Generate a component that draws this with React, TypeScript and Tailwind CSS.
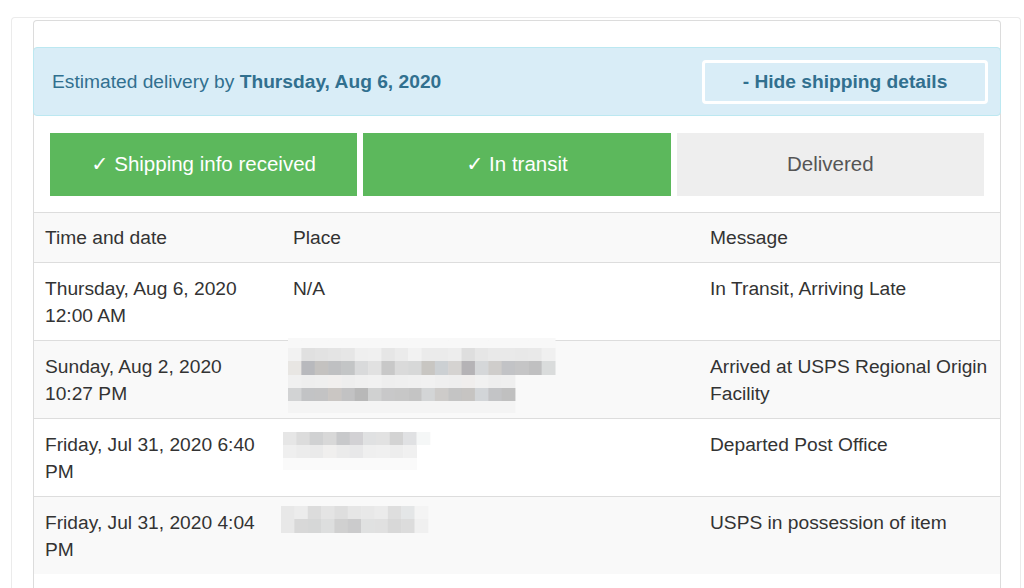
import React from "react";

type Band = { y: number; h: number; x: number; cells: string[] };

// Pixelated redaction block drawn over the "Place" cell.
function Mosaic({ width, height, bands, cell }: { width: number; height: number; bands: Band[]; cell: number }) {
  return (
    <svg width={width} height={height} viewBox={`0 0 ${width} ${height}`} className="block">
      {bands.map((b, bi) =>
        b.cells.map((c, ci) => (
          <rect key={`${bi}-${ci}`} x={b.x + ci * cell} y={b.y} width={cell + 0.5} height={b.h} fill={c} />
        ))
      )}
    </svg>
  );
}

const C = 13.35;

const place2: Band[] = [
  { y: 0, h: 10, x: 0, cells: Array(20).fill("#f8f8f8") },
  {
    y: 10,
    h: 13,
    x: 0,
    cells: ["#f2f2f2", "#e0e0e0", "#e2e2e2", "#e4e4e4", "#e6e6e6", "#efefef", "#f0f0f0", "#e6e6e6", "#ebebeb", "#f2f2f2", "#ebebeb", "#ebebeb", "#ededed", "#dedede", "#e6e6e6", "#e9e9e9", "#e9e9e9", "#e8e8e8", "#e9e9e9", "#f0f0f0"],
  },
  {
    y: 23,
    h: 14,
    x: 0,
    cells: ["#e8e6e3", "#b8b9bd", "#c4c2c0", "#bfc0c2", "#c3c5c6", "#d9dadb", "#e1e1e1", "#c8c8c8", "#dadada", "#d7d8d8", "#c8c6c2", "#ccd0d3", "#d5d3d1", "#b5b3b6", "#d5d7d9", "#cfcdcb", "#c2c3c6", "#c5c5c6", "#c0c0c1", "#dadcdc"],
  },
  { y: 37, h: 13, x: 0, cells: ["#f0f0f0", "#eeeeee", "#efefef", "#f1efee", "#eeeeee", "#f0f0f0", "#f1f1f1", "#eeeeee", "#efefef", "#f0f0f0", "#f1f1f1", "#efefef", "#eeeeee", "#f0eeed", "#f1f1f1", "#eeeeee", "#efefef"] },
  {
    y: 50,
    h: 13,
    x: 0,
    cells: ["#d2d3d4", "#c2c3c5", "#c3c3c4", "#cac6c3", "#c2c2c3", "#b8b8b8", "#d0d1d1", "#c8c8c9", "#c7c7c7", "#c4c4c4", "#d3d5d6", "#cdcbc9", "#c4c4c4", "#c6c4c2", "#d2d5d8", "#c3c4c6", "#c0c0c0"],
  },
  { y: 63, h: 12, x: 0, cells: Array(17).fill("#f4f4f4") },
];

const place3: Band[] = [
  { y: 0, h: 13, x: 0, cells: ["#e6e6e6", "#dcdcdc", "#d0d1d2", "#d8d8d8", "#c8c9cb", "#d2d1d4", "#e0e1e2", "#e2e2e2", "#d3d3d3", "#e0e1e3", "#f5f7f7"] },
  { y: 13, h: 13, x: 0, cells: ["#efefef", "#ececec", "#eaeaea", "#f0efee", "#ebebeb", "#e8e8e9", "#efefef", "#f0f0f0", "#ededed", "#f0f0f0"] },
  { y: 26, h: 12, x: 0, cells: Array(10).fill("#fafafa") },
];

const place4: Band[] = [
  { y: 0, h: 13, x: 0, cells: ["#e8e8e8", "#ececec", "#dcdcdc", "#e4e4e4", "#dedede", "#e6e6e6", "#e8e8e8", "#ebebeb", "#dedede", "#e4e6e7", "#f4f4f4"] },
  { y: 13, h: 14, x: 0, cells: ["#e8e8e8", "#d8d8d8", "#d6d7d7", "#dddede", "#d0d0d0", "#cbcbcc", "#e0e1e1", "#e0e0e0", "#d8d8d8", "#dcdcdc", "#f0f0f0"] },
];

type Row = { time: string; place?: React.ReactNode; message: string; striped: boolean };

const rows: Row[] = [
  { time: "Thursday, Aug 6, 2020 12:00 AM", place: "N/A", message: "In Transit, Arriving Late", striped: false },
  {
    time: "Sunday, Aug 2, 2020 10:27 PM",
    place: (
      <div className="absolute left-[7px] top-[-3px]">
        <Mosaic width={268} height={75} bands={place2} cell={C} />
      </div>
    ),
    message: "Arrived at USPS Regional Origin Facility",
    striped: true,
  },
  {
    time: "Friday, Jul 31, 2020 6:40 PM",
    place: (
      <div className="absolute left-[2px] top-[13px]">
        <Mosaic width={148} height={38} bands={place3} cell={C} />
      </div>
    ),
    message: "Departed Post Office",
    striped: false,
  },
  {
    time: "Friday, Jul 31, 2020 4:04 PM",
    place: (
      <div className="absolute left-[0px] top-[9px]">
        <Mosaic width={148} height={27} bands={place4} cell={C} />
      </div>
    ),
    message: "USPS in possession of item",
    striped: true,
  },
];

export default function App() {
  return (
    <div
      className="min-h-[588px] bg-white pt-[17px] text-[19.2px] leading-[27px] text-[#333]"
      style={{ fontFamily: '"Liberation Sans", Arial, "DejaVu Sans", sans-serif' }}
    >
      <div className="ml-[11px] mr-[3px] min-h-[620px] rounded-t-[4px] border border-b-0 border-[#ebebeb] pl-[21px] pr-[19px] pt-[2px]">
        <div className="min-h-[620px] rounded-t-[4px] border border-b-0 border-[#dcdcdc] pt-[26px]">
          {/* estimated delivery banner */}
          <div className="-mx-px flex h-[69px] items-center justify-between rounded-[4px] border border-[#bce8f1] bg-[#d9edf7] pl-[18px] pr-[12px] text-[#31708f]">
            <div>
              Estimated delivery by <span className="font-bold">Thursday, Aug 6, 2020</span>
            </div>
            <button className="h-[44px] w-[286px] rounded-[4px] border-[3px] border-white bg-transparent text-center font-bold text-[#31708f]">
              - Hide shipping details
            </button>
          </div>

          {/* progress steps */}
          <div className="mt-[17px] grid grid-cols-3 gap-[6px] px-[16px] text-[20.5px]">
            <div className="flex h-[63px] items-center justify-center bg-[#5cb85c] pb-[3px] text-white">✓ Shipping info received</div>
            <div className="flex h-[63px] items-center justify-center bg-[#5cb85c] pb-[3px] text-white">✓ In transit</div>
            <div className="flex h-[63px] items-center justify-center bg-[#eeeeee] pb-[3px] text-[#555]">Delivered</div>
          </div>

          {/* tracking history */}
          <table className="mt-[16px] w-full table-fixed border-collapse">
            <colgroup>
              <col className="w-[247px]" />
              <col className="w-[417px]" />
              <col />
            </colgroup>
            <thead>
              <tr className="bg-[#f9f9f9]">
                <th className="border-t border-b border-[#dddddd] pl-[11px] pr-3 pb-[11px] pt-[11px] text-left font-normal">Time and date</th>
                <th className="border-t border-b border-[#dddddd] px-3 pb-[11px] pt-[11px] text-left font-normal">Place</th>
                <th className="border-t border-b border-[#dddddd] px-3 pb-[11px] pt-[11px] text-left font-normal">Message</th>
              </tr>
            </thead>
            <tbody>
              {rows.map((r, i) => {
                const edge = i < rows.length - 1 ? "border-b border-[#dddddd]" : "";
                return (
                  <tr key={i} className={r.striped ? "bg-[#f9f9f9]" : "bg-white"}>
                    <td className={`h-[77px] pl-[11px] pr-3 pb-[11px] pt-[12px] align-top ${edge}`}>{r.time}</td>
                    <td className={`relative px-3 pb-[11px] pt-[12px] align-top ${edge}`}>{r.place}</td>
                    <td className={`px-3 pb-[11px] pt-[12px] align-top ${edge}`}>{r.message}</td>
                  </tr>
                );
              })}
            </tbody>
          </table>
        </div>
      </div>
    </div>
  );
}
